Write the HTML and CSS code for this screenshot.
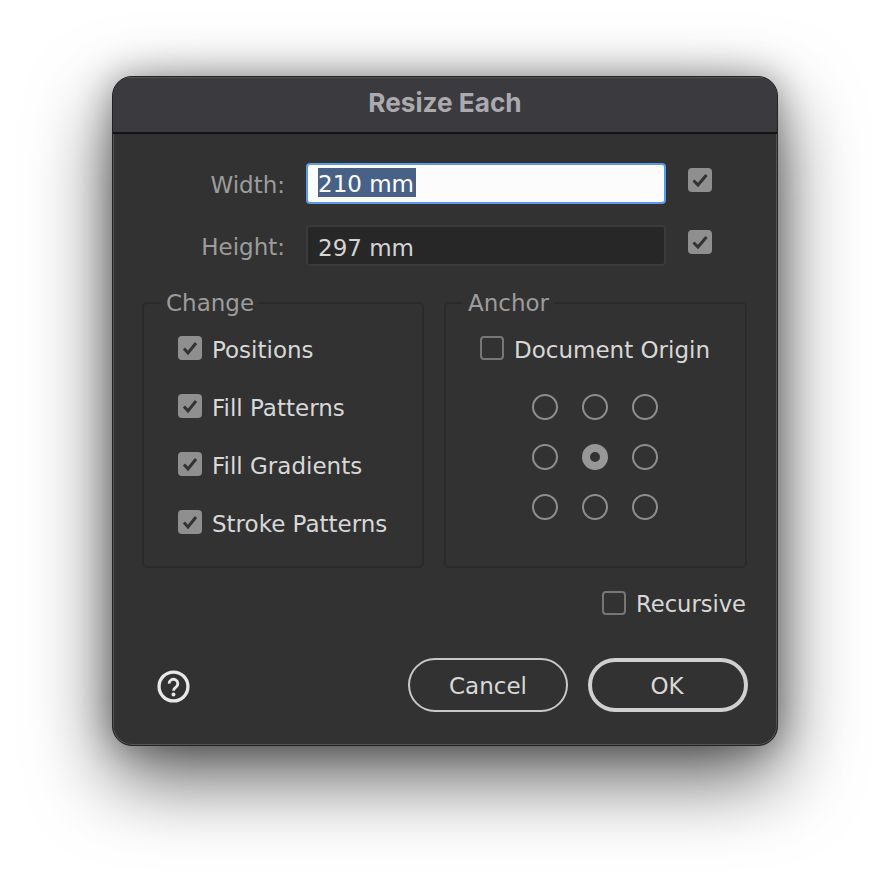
FILE: index.html
```html
<!DOCTYPE html>
<html lang="en">
<head>
<meta charset="utf-8">
<title>Resize Each</title>
<link rel="stylesheet" href="styles.css">
</head>
<body>
<main class="dialog">
  <header class="titlebar">Resize Each</header>
  <div class="content">
    <div class="size-row">
      <span class="size-label">Width:</span>
      <div class="field field-focus"><span class="selection">210 mm</span></div>
      <span class="box checked"><svg viewBox="0 0 24 24"><path d="M5.5 12.5l4.5 4.5 8.5-10"/></svg></span>
    </div>
    <div class="size-row size-row-second">
      <span class="size-label">Height:</span>
      <div class="field"><span class="value">297 mm</span></div>
      <span class="box checked"><svg viewBox="0 0 24 24"><path d="M5.5 12.5l4.5 4.5 8.5-10"/></svg></span>
    </div>
    <div class="groups">
      <fieldset class="group group-change">
        <legend>Change</legend>
        <div class="group-body">
          <label class="check"><span class="box checked"><svg viewBox="0 0 24 24"><path d="M6 12.5l4 4.5 8-10"/></svg></span>Positions</label>
          <label class="check"><span class="box checked"><svg viewBox="0 0 24 24"><path d="M6 12.5l4 4.5 8-10"/></svg></span>Fill Patterns</label>
          <label class="check"><span class="box checked"><svg viewBox="0 0 24 24"><path d="M6 12.5l4 4.5 8-10"/></svg></span>Fill Gradients</label>
          <label class="check"><span class="box checked"><svg viewBox="0 0 24 24"><path d="M6 12.5l4 4.5 8-10"/></svg></span>Stroke Patterns</label>
        </div>
      </fieldset>
      <fieldset class="group group-anchor">
        <legend>Anchor</legend>
        <div class="group-body">
          <label class="check"><span class="box"></span>Document Origin</label>
          <div class="radios">
            <span class="radio"></span><span class="radio"></span><span class="radio"></span>
            <span class="radio"></span><span class="radio on"></span><span class="radio"></span>
            <span class="radio"></span><span class="radio"></span><span class="radio"></span>
          </div>
        </div>
      </fieldset>
    </div>
    <div class="recursive-row">
      <label class="check check-recursive"><span class="box"></span>Recursive</label>
    </div>
    <div class="actions">
      <svg class="help" viewBox="0 0 32 32">
        <circle cx="16" cy="16" r="14"/>
        <path d="M11.8 13.2a4.2 4.2 0 1 1 6.6 3.4c-1.5 1-2.4 1.7-2.4 3.4"/>
        <circle class="dot" cx="16" cy="23.8" r="1.9"/>
      </svg>
      <div class="buttons">
        <button class="btn">Cancel</button>
        <button class="btn btn-default">OK</button>
      </div>
    </div>
  </div>
</main>
</body>
</html>
```
FILE: styles.css
```css
* { box-sizing: border-box; }
html, body { margin: 0; height: 100%; }
body {
  background: #fff;
  padding-top: 76px;
  overflow: hidden;
  font-family: "DejaVu Sans", sans-serif;
}
.dialog {
  width: 666px;
  height: 670px;
  margin: 0 auto;
  background: #323232;
  border-radius: 20px;
  border: 1px solid #222;
  box-shadow: inset 0 0 0 1px #555, 0 30px 80px rgba(0,0,0,.66), 0 0 34px rgba(0,0,0,.32);
  overflow: hidden;
}
.titlebar {
  height: 57px;
  background: #3b3a3e;
  border-bottom: 2px solid #141414;
  box-shadow: inset 0 1px 0 #555;
  color: #abaaae;
  font: 700 26.2px/52px Inter, sans-serif;
  text-align: center;
}
.content { padding: 29px 29px 0 29px; }
.size-row { display: flex; align-items: center; height: 41px; }
.size-row-second { margin-top: 21px; }
.size-label {
  width: 143px;
  text-align: right;
  color: #9c9c9c;
  font-size: 23px;
  padding-top: 2px;
}
.field {
  width: 360px;
  height: 41px;
  margin-left: 21px;
  margin-right: 22px;
  border-radius: 4px;
  padding-left: 10px;
  font-size: 23px;
  line-height: 43px;
  background: #272727;
  border: 2px solid #3a3a3a;
  color: #d4d4d4;
  white-space: nowrap;
}
.field-focus {
  background: #fcfcfc;
  border: 2px solid #5a9ae6;
  line-height: 37px;
}
.selection { display: inline-block; background: #486187; color: #fff; height: 29px; line-height: 33px; margin-top: 3px; vertical-align: top; width: 98px; }
.size-row .box { margin-bottom: 7px; }
.box {
  flex: none;
  width: 24px;
  height: 24px;
  border-radius: 4px;
  display: inline-block;
  border: 2px solid #767676;
}
.box.checked { background: #8f8f8f; border: 0; }
.box svg { display: block; width: 24px; height: 24px; }
.box path { fill: none; stroke: #333; stroke-width: 3; }
.groups { display: flex; gap: 20px; margin-top: 24px; }
.group {
  margin: 0;
  height: 278px;
  padding: 0;
  border: 2px solid #2a2a2a;
  border-radius: 5px;
  min-width: 0;
}
.group legend {
  margin-left: 17px;
  padding: 0 5px;
  color: #9c9c9c;
  font-size: 23px;
  line-height: 26px;
}
.group-change { width: 282px; }
.group-anchor { width: 303px; }
.group-body { padding: 20px 0 0 34px; }
.check {
  display: flex;
  align-items: flex-start;
  height: 24px;
  margin-bottom: 34px;
  color: #d8d8d8;
  font-size: 23px;
  line-height: 28px;
  white-space: nowrap;
}
.check .box { margin-right: 10px; }
.radios {
  display: grid;
  grid-template-columns: repeat(3, 26px);
  grid-auto-rows: 26px;
  gap: 24px;
  margin-left: 52px;
  justify-content: start;
}
.radio { border: 2px solid #8e8e8e; border-radius: 50%; }
.radio.on { border: 8.5px solid #979797; background: #333; }
.recursive-row { display: flex; justify-content: flex-end; margin-top: 23px; padding-right: 2px; }
.check-recursive { margin: 0; font-size: 22.6px; line-height: 26px; }
.actions {
  display: flex;
  justify-content: space-between;
  align-items: center;
  margin-top: 43px;
  padding-left: 15px;
}
.help { width: 33px; height: 33px; display: block; margin-top: 2px; }
.help circle { fill: none; stroke: #e8e8e8; stroke-width: 3.2; }
.help path { fill: none; stroke: #e8e8e8; stroke-width: 2.8; }
.help .dot { fill: #e8e8e8; stroke: none; }
.buttons { display: flex; gap: 20px; }
.btn {
  width: 160px;
  height: 54px;
  border-radius: 27px;
  border: 2px solid #c8c8c8;
  background: transparent;
  color: #d8d8d8;
  font: 23px/26px "DejaVu Sans", sans-serif;
  padding: 2px 0 0;
}
.btn-default { border: 4px solid #d0d0d0; padding-right: 2px; }
```
